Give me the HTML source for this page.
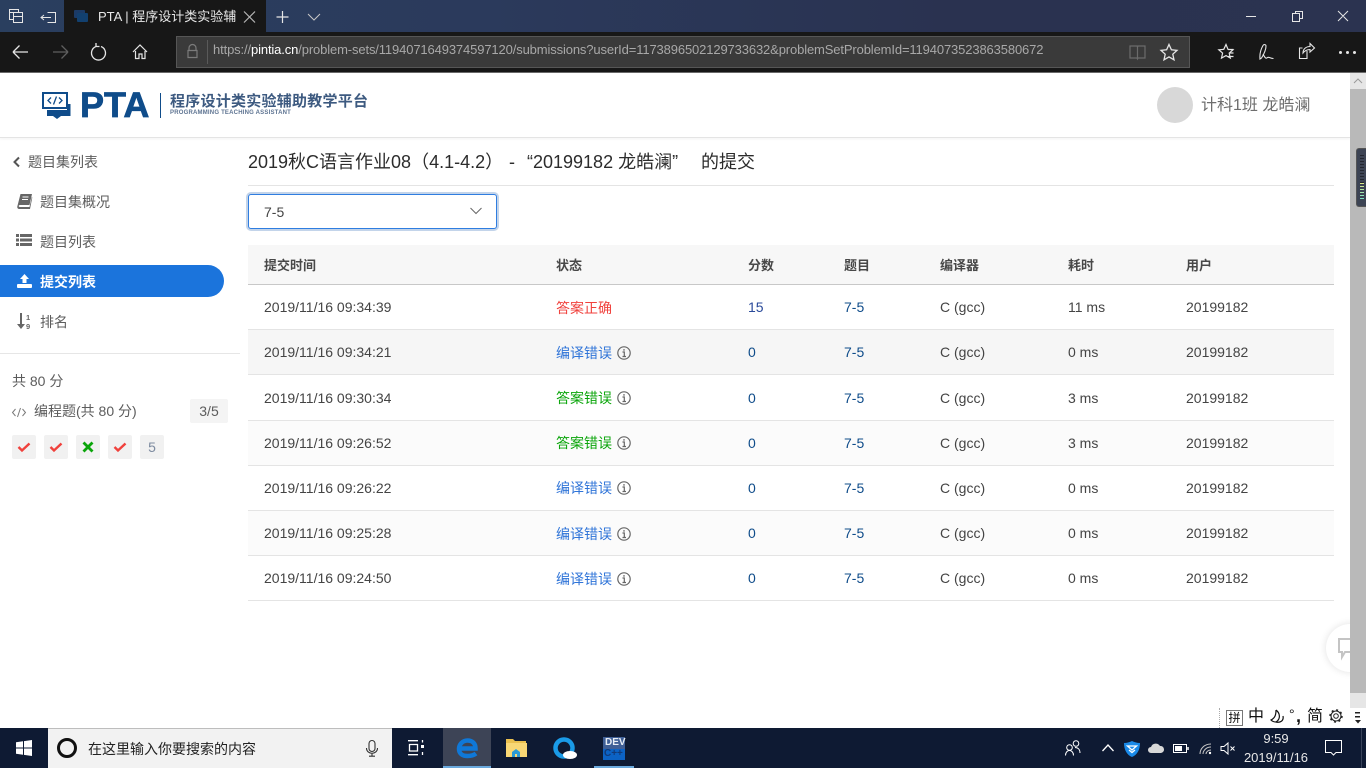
<!DOCTYPE html>
<html><head><meta charset="utf-8"><title>PTA</title>
<style>
html,body{margin:0;padding:0;width:1366px;height:768px;overflow:hidden;background:#fff}
body{font-family:"Liberation Sans","Noto Sans CJK SC",sans-serif;font-size:14px;color:#555;position:relative}
.a{position:absolute;white-space:nowrap}
svg{position:absolute;overflow:visible}
.c{line-height:20px;color:#444}
.b{color:#0f4c8a}
.s{color:#5c5c5c}
.h{top:256px;line-height:20px;font-size:13px;font-weight:700;color:#484848}
</style></head><body>
<!-- title bar -->
<div class="a" style="left:0;top:0;width:1366px;height:32px;background:linear-gradient(90deg,#2a3f5f 0,#2b3a5c 35%,#2a3250 70%,#2b3350 100%)"></div>
<div class="a" style="left:64px;top:0;width:202px;height:32px;background:#171717"></div>
<div class="a" style="left:0;top:32px;width:1366px;height:40px;background:#171717"></div>
<div class="a" style="left:0;top:72px;width:1366px;height:1px;background:#6b6b6b"></div>
<!-- address -->
<div class="a" style="left:176px;top:36px;width:1012px;height:30px;background:#3a3a3a;border:1px solid #565656"></div>
<div class="a" style="left:207px;top:40px;width:1px;height:24px;background:#5a5a5a"></div>
<div class="a" style="left:213px;top:41px;font-size:13px;line-height:18px;color:#a8a8a8;letter-spacing:-.13px">https://<span style="color:#fff">pintia.cn</span>/problem-sets/1194071649374597120/submissions?userId=1173896502129733632&amp;problemSetProblemId=1194073523863580672</div>
<svg style="left:0;top:0" width="1366" height="73" fill="none" stroke="#e6e6e6" stroke-width="1">
<path d="M9.500 12.500v-3h9v3M9.500 12.500h13v10h-9v-10M9.500 12.500v7h4M13.500 16.500h9"/>
<path d="M47.500 12.500h8v10h-8M41 17.500h10M44 15l-3 2.500 3 2.500"/>
<path d="M244 11.500l11 11M255 11.500l-11 11" stroke="#b5b5b5" stroke-width="1.200"/>
<path d="M282.500 11v12M276.500 17h12" stroke-width="1.200"/>
<path d="M308 14l6 6 6-6" stroke="#c8c8c8"/>
<path d="M1246 16.500h10M1295.500 13.500v-2h7v7h-3M1292.500 13.500h7v8h-7zM1338 11l10 10M1348 11l-10 10"/>
<path d="M13 52h15M13 52l6.500-6.500M13 52l6.500 6.500" stroke-width="1.300"/>
<path d="M53 52h15M68 52l-6.500-6.500M68 52l-6.500 6.500" stroke="#5f5f5f" stroke-width="1.300"/>
<path d="M96 46.500a7 7 0 1 0 5 0M96 46.500v-3.500M96 46.500h3.500" stroke-width="1.300"/>
<path d="M133 52l7-7 7 7M135.500 51v7.500h3.500v-4.500h3v4.500h3V51" stroke-width="1.200"/>
<path d="M189 50v-2a3.500 3.500 0 0 1 7 0v2M188 50.500h9v7h-9z" stroke="#7b7b7b" stroke-width="1.200"/>
<path d="M1130 46h7l.5 1 .5-1h7v12h-7l-.5 1-.5-1h-7zM1137.500 47v11" stroke="#6b6b6b" stroke-width="1.200"/>
<path d="M1169 44.500l2.400 5.300 5.600.6-4.200 3.800 1.200 5.600-5-2.900-5 2.900 1.200-5.600-4.200-3.800 5.600-.6z" stroke-width="1.300"/>
<path d="M1226 44.500l2 4.800 5 .5-3.800 3.300 1.100 5-4.300-2.500-4.500 2.500 1.100-5-3.800-3.300 5-.5zM1228 49.500h5.500M1230 53h3.500M1228 56.500h5.500" stroke-width="1.200"/>
<path d="M1260 59c-.5-5 1-10 3-13.500 1-1.500 3-1 3 .5 0 3-2 8-4.500 12zM1263 54c2 4 3 5 4.500 3.500 1.500-1 2.500 1 6 1" stroke-width="1.100"/>
<path d="M1307 51v7.500h-7.500V48h3M1303 53c0-4 3-6.500 7-6.500v-3l4.500 4.500-4.500 4v-2.500c-3 0-5 1-7 3.500z" stroke-width="1.100"/>
</svg>
<svg style="left:74px;top:10px" width="14" height="13"><rect x="0" y="0" width="11" height="8" rx="1" fill="#1b3a66"/><rect x="3" y="3" width="11" height="9" rx="1" fill="#12406f"/></svg>
<div class="a" style="left:98px;top:8px;font-size:13px;line-height:18px;color:#e8e8e8;width:140px;overflow:hidden">PTA | 程序设计类实验辅</div>
<div class="a" style="left:1339px;top:51px;width:3px;height:3px;background:#e6e6e6;box-shadow:7px 0 #e6e6e6,14px 0 #e6e6e6;border-radius:50%"></div>
<!-- header -->
<div class="a" style="left:0;top:73px;width:1350px;height:64px;background:#fff;border-bottom:1px solid #e4e4e4;box-shadow:0 1px 3px rgba(0,0,0,.05)"></div>
<svg style="left:42px;top:92px" width="30" height="28"><rect x="1" y="1" width="24" height="15" fill="#fff" stroke="#0f4c8a" stroke-width="2"/><path d="M5 18h20v-6h3.500v12H19l-4 3-4-3H5z" fill="#0f4c8a"/><path d="M9 5.500l-3 3 3 3M17 5.500l3 3-3 3M14.500 4.500l-3 8" fill="none" stroke="#0f4c8a" stroke-width="1.300"/></svg>
<div class="a" style="left:80px;top:85px;font-size:35px;line-height:41px;font-weight:700;color:#0f4c8a;-webkit-text-stroke:.7px #0f4c8a;transform:scaleX(1.03);transform-origin:left">PTA</div>
<div class="a" style="left:160px;top:93px;width:1px;height:25px;background:#0f4c8a"></div>
<div class="a" style="left:170px;top:92px;font-size:15px;line-height:20px;font-weight:700;color:#3d5a80;letter-spacing:.25px">程序设计类实验辅助教学平台</div>
<div class="a" style="left:170px;top:109px;font-size:6px;line-height:8px;font-weight:700;color:#5d7391;letter-spacing:.2px">PROGRAMMING TEACHING ASSISTANT</div>
<div class="a" style="left:1157px;top:87px;width:36px;height:36px;border-radius:50%;background:#d8d8d8"></div>
<div class="a" style="left:1201px;top:95px;font-size:16px;line-height:22px;color:#6e6e6e">计科1班 龙皓澜</div>
<!-- sidebar -->
<svg style="left:12px;top:156px" width="10" height="12" fill="none" stroke="#555" stroke-width="2"><path d="M7 1.500L2.500 6 7 10.500"/></svg>
<div class="a c s" style="left:28px;top:152px">题目集列表</div>
<svg style="left:17px;top:194px" width="16" height="15"><path d="M3.500 0h11.500l-2.500 11H3c-.8 0-1.300.5-1.300 1s.5 1 1.300 1h9.500l2.300-10 .5.500-2.300 11.500H2.500C1 15 0 14 .3 12.500z" fill="#666"/><path d="M5.500 3h6M5 5.500h6" stroke="#fff" fill="none"/></svg>
<div class="a c s" style="left:40px;top:192px">题目集概况</div>
<svg style="left:16px;top:234px" width="16" height="13" fill="#666"><rect x="0" y="0" width="3" height="3"/><rect x="4" y="0" width="12" height="3"/><rect x="0" y="4.500" width="3" height="3"/><rect x="4" y="4.500" width="12" height="3"/><rect x="0" y="9" width="3" height="3"/><rect x="4" y="9" width="12" height="3"/></svg>
<div class="a c s" style="left:40px;top:232px">题目列表</div>
<div class="a" style="left:0;top:265px;width:224px;height:32px;background:#1b74dc;border-radius:0 16px 16px 0"></div>
<svg style="left:17px;top:274px" width="15" height="14" fill="#fff"><path d="M7.500 0L12 5H9.500v4h-4V5H3z"/><rect x="0" y="10" width="15" height="4" rx="1"/></svg>
<div class="a" style="left:40px;top:272px;line-height:20px;color:#fff;font-weight:700">提交列表</div>
<svg style="left:17px;top:313px" width="16" height="17"><path d="M4 0v13" stroke="#666" stroke-width="2"/><path d="M0 11h8l-4 5z" fill="#666"/><text x="9" y="7" font-size="7.500" font-weight="700" fill="#666" font-family="Liberation Sans">1</text><text x="9" y="16" font-size="7.500" font-weight="700" fill="#666" font-family="Liberation Sans">9</text></svg>
<div class="a c s" style="left:40px;top:312px">排名</div>
<div class="a" style="left:0;top:353px;width:240px;height:1px;background:#e6e6e6"></div>
<div class="a c s" style="left:12px;top:371px">共 80 分</div>
<svg style="left:12px;top:407px" width="14" height="11" fill="none" stroke="#7a7a7a" stroke-width="1"><path d="M3.500 2L.5 5.500l3 3.500M10.500 2l3 3.500-3 3.500M8.500 1l-3 9"/></svg>
<div class="a c s" style="left:34px;top:401px">编程题(共 80 分)</div>
<div class="a s" style="left:190px;top:399px;width:38px;height:24px;line-height:24px;text-align:center;background:#f4f4f4;border-radius:2px">3/5</div>
<div class="a" style="left:12px;top:435px;width:24px;height:24px;background:#f1f1f1;border-radius:2px"></div>
<div class="a" style="left:44px;top:435px;width:24px;height:24px;background:#f1f1f1;border-radius:2px"></div>
<div class="a" style="left:76px;top:435px;width:24px;height:24px;background:#f1f1f1;border-radius:2px"></div>
<div class="a" style="left:108px;top:435px;width:24px;height:24px;background:#f1f1f1;border-radius:2px"></div>
<div class="a" style="left:140px;top:435px;width:24px;height:24px;line-height:24px;text-align:center;background:#f1f1f1;border-radius:2px;color:#7d8ba0">5</div>
<svg style="left:0;top:435px" width="140" height="24" fill="none" stroke-width="2.400"><path d="M18.500 12l3.500 3.500 7.500-7M50.500 12l3.500 3.500 7.500-7M114.500 12l3.500 3.500 7.500-7" stroke="#f0413c"/><path d="M83.500 7.500l9 9M92.500 7.500l-9 9" stroke="#0aa50a" stroke-width="2.800"/></svg>
<!-- main -->
<div class="a" style="left:248px;top:150px;font-size:18px;line-height:24px;color:#2c2c2c">2019秋C语言作业08（4.1-4.2）</div>
<div class="a" style="left:509px;top:150px;font-size:18px;line-height:24px;color:#2c2c2c">-</div>
<div class="a" style="left:527px;top:150px;font-size:18px;line-height:24px;color:#2c2c2c">“20199182 龙皓澜”</div>
<div class="a" style="left:701px;top:150px;font-size:18px;line-height:24px;color:#2c2c2c">的提交</div>
<div class="a" style="left:248px;top:185px;width:1086px;height:1px;background:#e4e4e4"></div>
<div class="a" style="left:248px;top:194px;width:247px;height:33px;border:1px solid #2f7de0;border-radius:3px;box-shadow:0 0 0 2px #c3d4ea;background:#fff"></div>
<div class="a c" style="left:264px;top:202px">7-5</div>
<svg style="left:470px;top:207px" width="12" height="8" fill="none" stroke="#666"><path d="M.5 1l5.500 5.500L11.500 1"/></svg>
<!-- table -->
<div class="a" style="left:248px;top:245px;width:1086px;height:39px;background:#f7f7f7;border-bottom:1px solid #c8c8c8"></div>
<div class="a" style="left:248px;top:330px;width:1086px;height:44px;background:#f6f6f6"></div>
<div class="a" style="left:248px;top:421px;width:1086px;height:44px;background:#fbfbfb"></div>
<div class="a" style="left:248px;top:511px;width:1086px;height:44px;background:#fbfbfb"></div>
<div class="a" style="left:248px;top:329px;width:1086px;height:1px;background:#e4e4e4;box-shadow:0 45px #e4e4e4,0 91px #e4e4e4,0 136px #e4e4e4,0 181px #e4e4e4,0 226px #e4e4e4,0 271px #e4e4e4"></div>
<div class="a h" style="left:264px">提交时间</div>
<div class="a h" style="left:556px">状态</div>
<div class="a h" style="left:748px">分数</div>
<div class="a h" style="left:844px">题目</div>
<div class="a h" style="left:940px">编译器</div>
<div class="a h" style="left:1068px">耗时</div>
<div class="a h" style="left:1186px">用户</div>

<div class="a c" style="top:297px;left:264px">2019/11/16 09:34:39</div><div class="a c" style="top:298px;left:556px;color:#f0413c">答案正确</div><div class="a c b" style="top:297px;left:748px;color:#2a4a9a">15</div><div class="a c b" style="top:297px;left:844px">7-5</div><div class="a c" style="top:297px;left:940px">C (gcc)</div><div class="a c" style="top:297px;left:1068px">11 ms</div><div class="a c" style="top:297px;left:1186px">20199182</div>
<div class="a c" style="top:342px;left:264px">2019/11/16 09:34:21</div><div class="a c" style="top:343px;left:556px;color:#2f74d8">编译错误</div><div class="a c b" style="top:342px;left:748px">0</div><div class="a c b" style="top:342px;left:844px">7-5</div><div class="a c" style="top:342px;left:940px">C (gcc)</div><div class="a c" style="top:342px;left:1068px">0 ms</div><div class="a c" style="top:342px;left:1186px">20199182</div>
<div class="a c" style="top:388px;left:264px">2019/11/16 09:30:34</div><div class="a c" style="top:388px;left:556px;color:#0aa50a">答案错误</div><div class="a c b" style="top:388px;left:748px">0</div><div class="a c b" style="top:388px;left:844px">7-5</div><div class="a c" style="top:388px;left:940px">C (gcc)</div><div class="a c" style="top:388px;left:1068px">3 ms</div><div class="a c" style="top:388px;left:1186px">20199182</div>
<div class="a c" style="top:433px;left:264px">2019/11/16 09:26:52</div><div class="a c" style="top:433px;left:556px;color:#0aa50a">答案错误</div><div class="a c b" style="top:433px;left:748px">0</div><div class="a c b" style="top:433px;left:844px">7-5</div><div class="a c" style="top:433px;left:940px">C (gcc)</div><div class="a c" style="top:433px;left:1068px">3 ms</div><div class="a c" style="top:433px;left:1186px">20199182</div>
<div class="a c" style="top:478px;left:264px">2019/11/16 09:26:22</div><div class="a c" style="top:478px;left:556px;color:#2f74d8">编译错误</div><div class="a c b" style="top:478px;left:748px">0</div><div class="a c b" style="top:478px;left:844px">7-5</div><div class="a c" style="top:478px;left:940px">C (gcc)</div><div class="a c" style="top:478px;left:1068px">0 ms</div><div class="a c" style="top:478px;left:1186px">20199182</div>
<div class="a c" style="top:523px;left:264px">2019/11/16 09:25:28</div><div class="a c" style="top:524px;left:556px;color:#2f74d8">编译错误</div><div class="a c b" style="top:523px;left:748px">0</div><div class="a c b" style="top:523px;left:844px">7-5</div><div class="a c" style="top:523px;left:940px">C (gcc)</div><div class="a c" style="top:523px;left:1068px">0 ms</div><div class="a c" style="top:523px;left:1186px">20199182</div>
<div class="a c" style="top:568px;left:264px">2019/11/16 09:24:50</div><div class="a c" style="top:569px;left:556px;color:#2f74d8">编译错误</div><div class="a c b" style="top:568px;left:748px">0</div><div class="a c b" style="top:568px;left:844px">7-5</div><div class="a c" style="top:568px;left:940px">C (gcc)</div><div class="a c" style="top:568px;left:1068px">0 ms</div><div class="a c" style="top:568px;left:1186px">20199182</div>
<svg style="left:617px;top:346px" width="14" height="240" fill="none" stroke="#666">
<g><circle cx="7" cy="7" r="6.200" stroke-width="1.200"/><path d="M5.500 6H7.300v4.500M5.500 10.500h3.500M7 3v1.800" stroke-width="1.200"/></g>
<g transform="translate(0 45)"><circle cx="7" cy="7" r="6.200" stroke-width="1.200"/><path d="M5.500 6H7.300v4.500M5.500 10.500h3.500M7 3v1.800" stroke-width="1.200"/></g>
<g transform="translate(0 90)"><circle cx="7" cy="7" r="6.200" stroke-width="1.200"/><path d="M5.500 6H7.300v4.500M5.500 10.500h3.500M7 3v1.800" stroke-width="1.200"/></g>
<g transform="translate(0 135)"><circle cx="7" cy="7" r="6.200" stroke-width="1.200"/><path d="M5.500 6H7.300v4.500M5.500 10.500h3.500M7 3v1.800" stroke-width="1.200"/></g>
<g transform="translate(0 181)"><circle cx="7" cy="7" r="6.200" stroke-width="1.200"/><path d="M5.500 6H7.300v4.500M5.500 10.500h3.500M7 3v1.800" stroke-width="1.200"/></g>
<g transform="translate(0 226)"><circle cx="7" cy="7" r="6.200" stroke-width="1.200"/><path d="M5.500 6H7.300v4.500M5.500 10.500h3.500M7 3v1.800" stroke-width="1.200"/></g>
</svg>
<!-- feedback -->
<div class="a" style="left:1326px;top:624px;width:48px;height:48px;border-radius:50%;background:#fff;box-shadow:0 0 8px rgba(0,0,0,.12)"></div>
<svg style="left:1338px;top:638px" width="14" height="22" fill="none" stroke="#c4c4c4" stroke-width="2"><path d="M1 1h14v13H7l-3 5v-5H1z"/></svg>
<!-- scrollbar -->
<div class="a" style="left:1350px;top:73px;width:16px;height:635px;background:#b9b9b9"></div>
<div class="a" style="left:1350px;top:73px;width:16px;height:16px;background:#e6e6e6"></div>
<svg style="left:1352px;top:77px" width="12" height="8" fill="none" stroke="#9a9a9a"><path d="M2 6l4-4 4 4"/></svg>
<div class="a" style="left:1350px;top:693px;width:16px;height:15px;background:#e6e6e6"></div>
<div class="a" style="left:1356px;top:148px;width:10px;height:59px;background:#3d4454;border-radius:3px 0 0 3px;border:1px solid #555;border-right:0;box-sizing:border-box"></div>
<div class="a" style="left:1360px;top:155px;width:4px;height:28px;background:repeating-linear-gradient(#23262f 0 1px,#3d4454 1px 3px)"></div>
<div class="a" style="left:1360px;top:183px;width:4px;height:18px;background:linear-gradient(#dfe88a,#6fe0cc);-webkit-mask:repeating-linear-gradient(#000 0 1px,transparent 1px 3px);mask:repeating-linear-gradient(#000 0 1px,transparent 1px 3px)"></div>
<!-- IME bar -->
<div class="a" style="left:1215px;top:708px;width:151px;height:20px;background:#fff"></div>
<div class="a" style="left:1219px;top:708px;width:0;height:20px;border-left:1px dotted #aaa"></div>
<div class="a" style="left:1226px;top:710px;width:15px;height:14px;border:1px solid #777;font-size:12px;line-height:14px;text-align:center;color:#111">拼</div>
<div class="a" style="left:1248px;top:707px;font-size:16px;line-height:20px;color:#111">中</div>
<svg style="left:1270px;top:709px" width="16" height="16" fill="none" stroke="#111" stroke-width="1.200"><path d="M6 1c4 3 5 9 0 12 4 1 8-1 7-6M6 1c0 5-1 8-5 10 1 1 3 2 5 2"/></svg>
<div class="a" style="left:1289px;top:706px;font-size:14px;line-height:16px;color:#111">°</div>
<div class="a" style="left:1296px;top:707px;font-size:18px;line-height:18px;font-weight:700;color:#111">,</div>
<div class="a" style="left:1307px;top:707px;font-size:16px;line-height:20px;color:#111">简</div>
<svg style="left:1329px;top:709px" width="14" height="14" fill="none" stroke="#222"><circle cx="7" cy="7" r="2.300"/><circle cx="7" cy="7" r="5" stroke-width="1.100"/><circle cx="7" cy="7" r="6" stroke-width="1.500" stroke-dasharray="2 2.700"/></svg>
<svg style="left:1354px;top:712px" width="8" height="13" fill="#222"><rect x="1" y="0" width="5" height="1.500"/><rect x="1" y="4" width="5" height="1.500"/><path d="M1 8h6l-3 3.500z"/></svg>
<!-- taskbar -->
<div class="a" style="left:0;top:728px;width:1366px;height:40px;background:#0e1a33"></div>
<svg style="left:16px;top:740px" width="16" height="16" fill="#fff"><path d="M0 2.300l7-1v6.200H0zM8 1.100l8-1.100v7.500H8zM0 8.500h7v6.200l-7-1zM8 8.500h8V16l-8-1.100z"/></svg>
<div class="a" style="left:48px;top:728px;width:344px;height:40px;background:#f2f2f2;border-top:1px solid #bdbdbd;box-sizing:border-box"></div>
<div class="a" style="left:57px;top:738px;width:14px;height:14px;border:3px solid #111;border-radius:50%"></div>
<div class="a" style="left:88px;top:739px;font-size:14px;line-height:20px;color:#222">在这里输入你要搜索的内容</div>
<svg style="left:366px;top:740px" width="12" height="17" fill="none" stroke="#333" stroke-width="1.100"><rect x="3" y="0.500" width="6" height="11" rx="3"/><path d="M.5 8c0 7 11 7 11 0M6 13v3M3 16.200h6"/></svg>
<svg style="left:408px;top:740px" width="17" height="16" fill="none" stroke="#fff" stroke-width="1.300"><path d="M0 .7h10M0 14.700h10M1.500 4.500h8v6.500h-8zM14.500 0v2.500M14.500 12v3"/><rect x="13" y="5" width="3" height="3" fill="#fff" stroke="none"/></svg>
<div class="a" style="left:443px;top:728px;width:48px;height:40px;background:#3d4456"></div>
<div class="a" style="left:443px;top:766px;width:48px;height:2px;background:#6aa9dd"></div>
<svg style="left:457px;top:738px" width="21" height="20" fill="none" stroke="#0f78d8" stroke-width="4.500"><path d="M4 10.500h14.500c0-5-3-8-8-8S2 6.500 2 11s3.500 7 8.500 7c3 0 6-.5 8.500-2.500"/></svg>
<svg style="left:505px;top:738px" width="22" height="20"><path d="M1 1h7l2 2h11v3H1z" fill="#eac04f"/><rect x="1" y="5" width="21" height="14" fill="#f8d775"/><path d="M7 19v-5l4-3 4 3v5h-3v-3h-2v3z" fill="#2a9ad6"/></svg>
<svg style="left:553px;top:737px" width="24" height="22"><circle cx="11" cy="11" r="8.500" fill="none" stroke="#1a9be8" stroke-width="4.500"/><ellipse cx="17" cy="18" rx="7" ry="4" fill="#fff"/></svg>
<svg style="left:603px;top:737px" width="22" height="23"><rect width="22" height="12" fill="#3f5f96"/><rect y="12" width="22" height="11" fill="#0c62c4"/></svg>
<div class="a" style="left:605px;top:736px;font-size:10px;line-height:13px;font-weight:700;color:#e8eef6">DEV</div>
<div class="a" style="left:604px;top:747px;font-size:10px;line-height:13px;font-weight:700;color:#123a78">C++</div>
<div class="a" style="left:594px;top:766px;width:40px;height:2px;background:#6aa9dd"></div>
<!-- tray -->
<svg style="left:1065px;top:740px" width="16" height="16" fill="none" stroke="#fff"><circle cx="11" cy="3.500" r="2.800"/><circle cx="4.500" cy="7.500" r="2.800"/><path d="M.5 15.500c0-3 1.800-5 4-5s4 2 4 5M10 7.500c3 0 5 2 5 5.500"/></svg>
<svg style="left:1102px;top:744px" width="12" height="8" fill="none" stroke="#fff" stroke-width="1.300"><path d="M.5 7l5.500-6 5.500 6"/></svg>
<svg style="left:1124px;top:741px" width="16" height="16"><path d="M0 2c3 0 6-1 8-2 2 1 5 2 8 2 0 7-3 12-8 14C3 14 0 9 0 2z" fill="#1a8ae8"/><path d="M3.500 5h9L8 9zM5 9l3 2.500L11 9" stroke="#fff" fill="none" stroke-width="1.300"/></svg>
<svg style="left:1148px;top:742px" width="16" height="11"><path d="M3 11a3 3 0 0 1 0-6 5 5 0 0 1 9-1 3.500 3.500 0 0 1 1 7z" fill="#d8d8d8"/></svg>
<svg style="left:1173px;top:744px" width="16" height="10" fill="none" stroke="#fff"><rect x=".5" y=".5" width="13" height="8"/><rect x="2" y="2" width="7" height="5" fill="#fff" stroke="none"/><path d="M15 3v3" stroke-width="1.500"/></svg>
<svg style="left:1199px;top:743px" width="13" height="12" fill="none" stroke="#c8c8c8"><path d="M1 11C1 6 5 1 12 1M4 11c0-3 3-7 8-7M7 11c0-2 2-4 5-4"/><circle cx="11" cy="10" r="1.200" fill="#fff" stroke="none"/></svg>
<svg style="left:1220px;top:742px" width="15" height="13" fill="none" stroke="#fff"><path d="M1 4.500h3L8 1v11L4 8.500H1zM10.500 4.500l4 4M14.500 4.500l-4 4"/></svg>
<div class="a" style="left:1241px;top:729px;width:70px;text-align:center;font-size:13px;line-height:19px;color:#e8e8e8">9:59<br>2019/11/16</div>
<svg style="left:1325px;top:740px" width="17" height="16" fill="none" stroke="#fff"><path d="M.5 .5h16v12H11l-2.500 2.500-2.500-2.500H.5z"/></svg>
<div class="a" style="left:1361px;top:728px;width:1px;height:40px;background:#39435a"></div>
</body></html>
